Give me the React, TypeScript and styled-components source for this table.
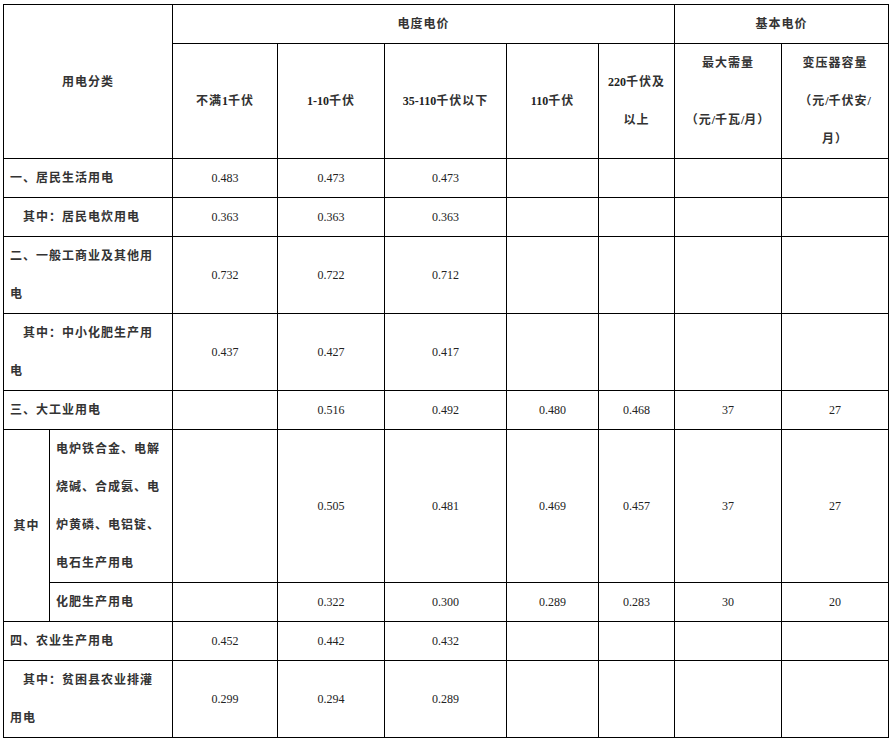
import React from "react";
import styled, { createGlobalStyle } from "styled-components";

const GlobalStyle = createGlobalStyle`
  html, body {
    margin: 0;
    padding: 0;
    background: #ffffff;
  }
`;

const MIXED = `"Liberation Serif", "Noto Sans CJK SC", serif`;

const Page = styled.div`
  padding: 4px 0 0 3px;
`;

const Grid = styled.div`
  display: grid;
  grid-template-columns: 46px 123px 105px 107px 122px 92px 76px 107px 107px;
  width: max-content;
  border-left: 1px solid #000;
  border-top: 1px solid #000;
`;

type CellProps = {
  $span?: number;
  $rows?: number;
  $left?: boolean;
  $top?: boolean;
  $num?: boolean;
};

const Cell = styled.div<CellProps>`
  grid-column: span ${(p) => p.$span ?? 1};
  grid-row: span ${(p) => p.$rows ?? 1};
  display: flex;
  flex-direction: column;
  justify-content: ${(p) => (p.$top ? "flex-start" : "center")};
  align-items: ${(p) => (p.$left ? "flex-start" : "center")};
  text-align: ${(p) => (p.$left ? "left" : "center")};
  padding: ${(p) => (p.$left ? "0 6px" : "0")};
  border-right: 1px solid #000;
  border-bottom: 1px solid #000;
  line-height: 38px;
  font-family: ${MIXED};
  font-size: 12px;
  font-weight: ${(p) => (p.$num ? 400 : 700)};
  letter-spacing: ${(p) => (p.$num ? "0" : "1px")};
  color: ${(p) => (p.$num ? "#222" : "#333")};
`;

const Line = styled.span<{ $indent?: boolean; $gap?: boolean }>`
  display: block;
  white-space: nowrap;
  padding-left: ${(p) => (p.$indent ? "13px" : "0")};
  margin-top: ${(p) => (p.$gap ? "19px" : "0")};
`;

// latin runs inside bold CJK text keep their natural spacing
const Latin = styled.span`
  letter-spacing: 0;
  color: #222;
`;

type Row = {
  label: string[];
  indent?: boolean;
  sub?: boolean;
  values: string[];
};

const rows: Row[] = [
  { label: ["一、居民生活用电"], values: ["0.483", "0.473", "0.473", "", "", "", ""] },
  { label: ["其中：居民电炊用电"], indent: true, values: ["0.363", "0.363", "0.363", "", "", "", ""] },
  { label: ["二、一般工商业及其他用", "电"], values: ["0.732", "0.722", "0.712", "", "", "", ""] },
  { label: ["其中：中小化肥生产用", "电"], indent: true, values: ["0.437", "0.427", "0.417", "", "", "", ""] },
  { label: ["三、大工业用电"], values: ["", "0.516", "0.492", "0.480", "0.468", "37", "27"] },
  {
    label: ["电炉铁合金、电解", "烧碱、合成氨、电", "炉黄磷、电铝锭、", "电石生产用电"],
    sub: true,
    values: ["", "0.505", "0.481", "0.469", "0.457", "37", "27"],
  },
  { label: ["化肥生产用电"], sub: true, values: ["", "0.322", "0.300", "0.289", "0.283", "30", "20"] },
  { label: ["四、农业生产用电"], values: ["0.452", "0.442", "0.432", "", "", "", ""] },
  { label: ["其中：贫困县农业排灌", "用电"], indent: true, values: ["0.299", "0.294", "0.289", "", "", "", ""] },
];

const voltages: string[][] = [
  ["不满1千伏"],
  ["1-10千伏"],
  ["35-110千伏以下"],
  ["110千伏"],
  ["220千伏及", "以上"],
];

function Text({ children }: { children: string }) {
  const parts = children.split(/([0-9\-./]+)/);
  return (
    <>
      {parts.map((s, i) => (i % 2 === 1 ? <Latin key={i}>{s}</Latin> : s))}
    </>
  );
}

function Lines({ lines, indent }: { lines: string[]; indent?: boolean }) {
  return (
    <>
      {lines.map((t, i) => (
        <Line key={i} $indent={indent && i === 0}>
          <Text>{t}</Text>
        </Line>
      ))}
    </>
  );
}

export default function App() {
  return (
    <>
      <GlobalStyle />
      <Page>
        <Grid>
          <Cell $span={2} $rows={2}>
            <Line>用电分类</Line>
          </Cell>
          <Cell $span={5}>
            <Line>电度电价</Line>
          </Cell>
          <Cell $span={2}>
            <Line>基本电价</Line>
          </Cell>

          {voltages.map((v, i) => (
            <Cell key={i}>
              <Lines lines={v} />
            </Cell>
          ))}
          <Cell $top>
            <Line>最大需量</Line>
            <Line $gap>
              <Text>（元/千瓦/月）</Text>
            </Line>
          </Cell>
          <Cell>
            <Lines lines={["变压器容量", "（元/千伏安/", "月）"]} />
          </Cell>

          {rows.map((r, i) => (
            <React.Fragment key={i}>
              {r.sub && i === 5 && (
                <Cell $rows={2}>
                  <Line>其中</Line>
                </Cell>
              )}
              <Cell $span={r.sub ? 1 : 2} $left>
                <Lines lines={r.label} indent={r.indent} />
              </Cell>
              {r.values.map((v, j) => (
                <Cell key={j} $num>
                  <Line>{v}</Line>
                </Cell>
              ))}
            </React.Fragment>
          ))}
        </Grid>
      </Page>
    </>
  );
}
